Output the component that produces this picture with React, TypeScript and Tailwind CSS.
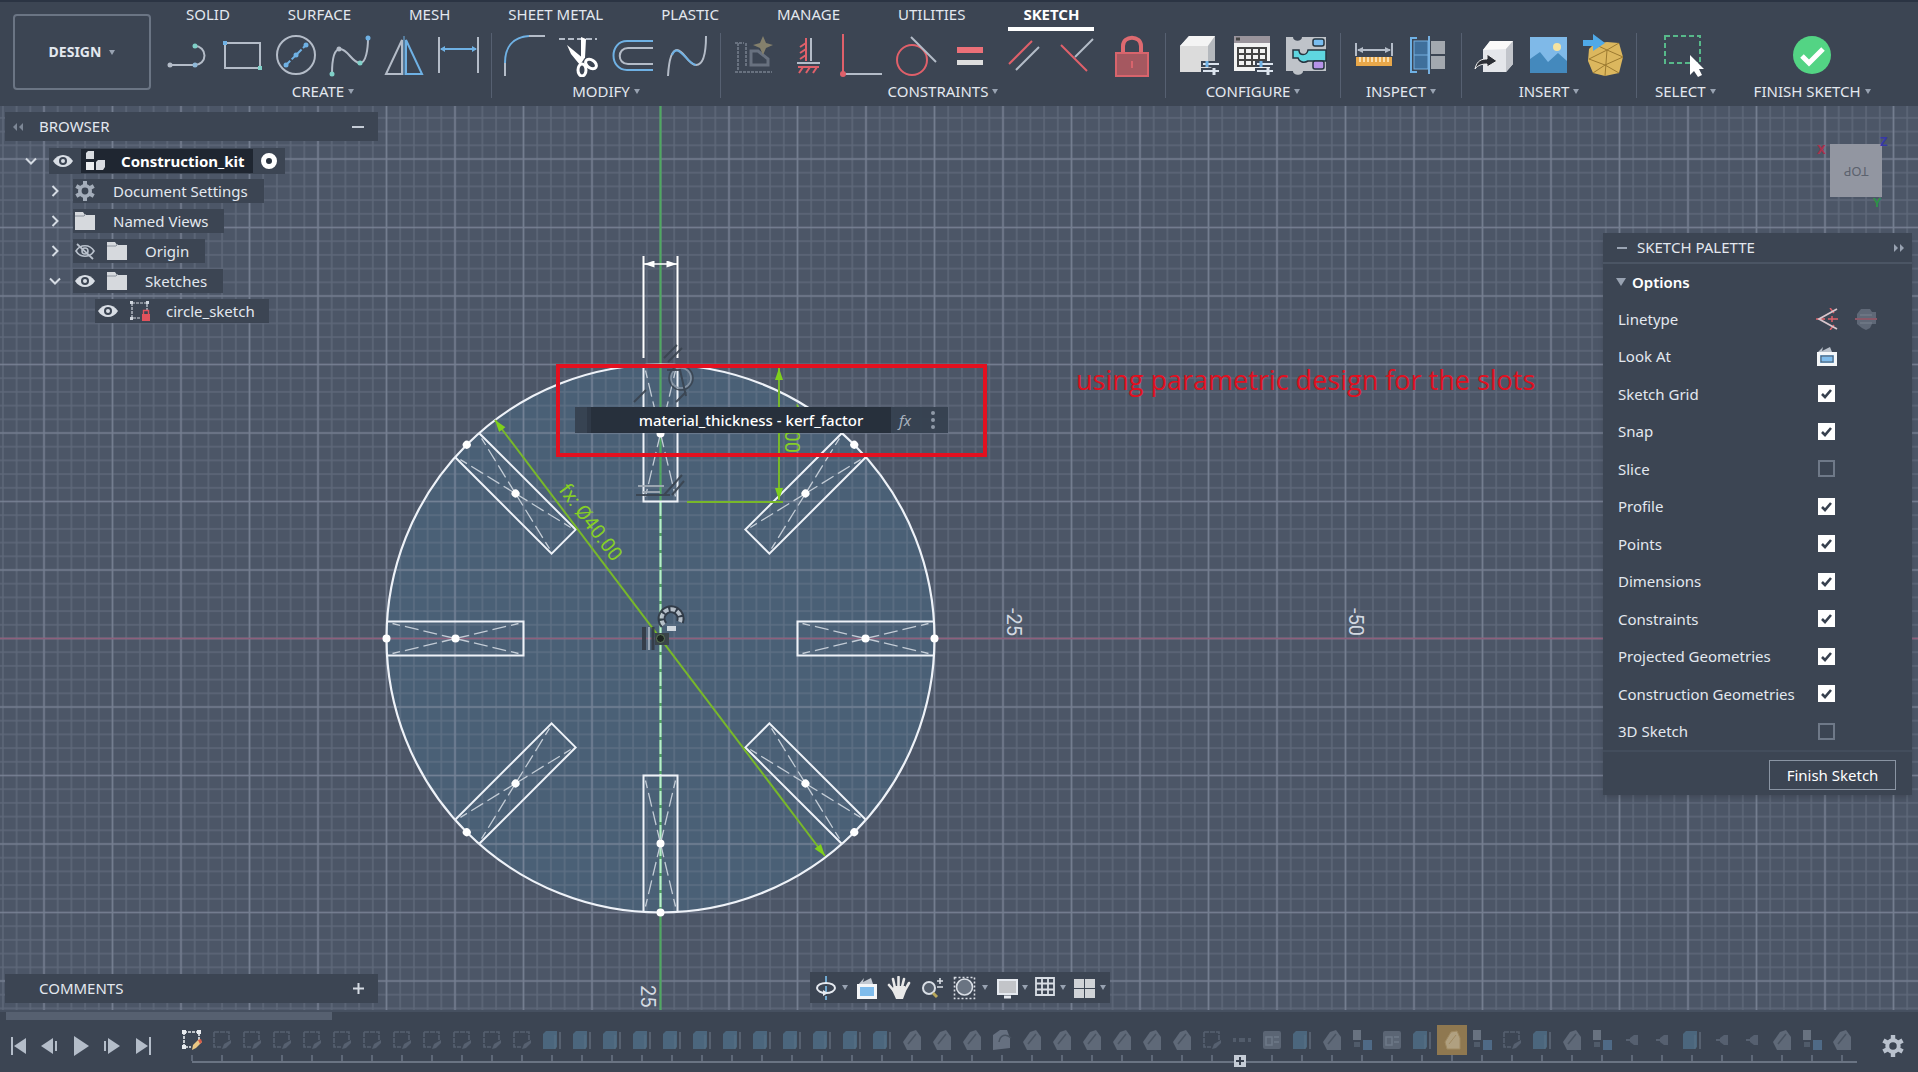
import type { ReactNode } from "react";

const GREY = "#b4bcc8";
const BLUE = "#6fb1e4";
const RED = "#e0606a";
const TEAL = "#7fd0c8";

function Svg({ size = 44, box = 44, children }: { size?: number; box?: number; children: ReactNode }) {
  return (
    <svg width={size} height={size} viewBox={`0 0 ${box} ${box}`} fill="none" aria-hidden="true" className="shrink-0">
      {children}
    </svg>
  );
}

/* ---------- Toolbar icons ---------- */

const createIcons: [string, ReactNode][] = [
  ["Line", <><path d="M4 32H29A9.5 9.5 0 0 0 29 13" stroke={GREY} strokeWidth="2" /><circle cx="4" cy="32" r="2.5" fill={GREY} /><circle cx="29" cy="32" r="2.5" fill="#8fb8d8" /><circle cx="29" cy="13" r="2.5" fill={TEAL} /></>],
  ["Rectangle", <><rect x="5" y="10" width="35" height="25" stroke={GREY} strokeWidth="2" /><rect x="3" y="8" width="4" height="4" fill={BLUE} /><rect x="38" y="33" width="4" height="4" fill={TEAL} /></>],
  ["Circle", <><circle cx="22" cy="22" r="19" stroke={GREY} strokeWidth="2" /><path d="M12 32L32 12" stroke={BLUE} strokeWidth="2" strokeDasharray="6 2" /><circle cx="12" cy="32" r="2.5" fill={BLUE} /><circle cx="22" cy="22" r="2.5" fill={BLUE} /><circle cx="32" cy="12" r="2.5" fill={BLUE} /></>],
  ["Spline", <><path d="M4 41C4 28 6 16 12 16C20 16 24 30 32 30C38 30 40 16 40 5" stroke={GREY} strokeWidth="2" /><circle cx="4" cy="41" r="2.5" fill={TEAL} /><circle cx="11" cy="16" r="2.5" fill={GREY} /><circle cx="32" cy="30" r="2.5" fill={TEAL} /><circle cx="40" cy="5" r="2.5" fill={BLUE} /></>],
  ["Mirror", <><path d="M20 7V41H4Z" stroke={GREY} strokeWidth="2" /><path d="M24 7V41H40Z" stroke={BLUE} strokeWidth="2" /><path d="M22 3V42" stroke={BLUE} strokeWidth="1" /></>],
  ["Dimension", <><path d="M3 4V40M42 4V40" stroke={GREY} strokeWidth="2" /><path d="M5 16H40" stroke={BLUE} strokeWidth="2" /><path d="M4 16L9 13V19ZM41 16L36 13V19Z" fill={BLUE} /></>],
];

const modifyIcons: [string, ReactNode][] = [
  ["Fillet", <><path d="M2 43V30" stroke={GREY} strokeWidth="2" /><path d="M2 30C2 14 10 4 26 3" stroke={BLUE} strokeWidth="2" /><path d="M26 3H42" stroke={GREY} strokeWidth="2" /></>],
  ["Trim", <><path d="M2 6H40" stroke={GREY} strokeWidth="2" strokeDasharray="6 3" /><path d="M24 4L29 6L28 25L24 28ZM10 12L27 26L23 32L14 21Z" fill="#fff" /><ellipse cx="25" cy="37" rx="4" ry="6" stroke="#fff" strokeWidth="3" /><ellipse cx="34" cy="31" rx="6" ry="4" transform="rotate(35 34 31)" stroke="#fff" strokeWidth="3" /></>],
  ["Offset", <><path d="M42 8H16C-2 8 -2 37 16 37H42" stroke={BLUE} strokeWidth="2" /><path d="M42 15H17C6 15 6 31 17 31H42" stroke={GREY} strokeWidth="2" /></>],
  ["Curvature", <><path d="M3 43C4 26 7 17 12 17C19 17 23 32 31 32C39 32 41 18 41 3" stroke={GREY} strokeWidth="2" /><path d="M7 22C13 8 22 31 31 32" stroke={BLUE} strokeWidth="2" /></>],
];

const constraintIcons: [string, ReactNode][] = [
  ["AutoConstrain", <><path d="M6 10V38M3 10H12M3 39H40M14 10V34" stroke="#68717f" strokeWidth="2" strokeDasharray="3 1" /><path d="M19 18V32H36V26L26 18Z" stroke="#68717f" strokeWidth="3" /><path d="M31 3L34 10L41 12L34 15L31 22L28 15L21 12L28 10Z" fill="#84806c" /></>],
  ["Horizontal/Vertical", <><path d="M25 5V28" stroke={GREY} strokeWidth="2" /><path d="M20 5V28M20 10L14 14M20 16L14 20M20 22L14 26" stroke={RED} strokeWidth="2" /><path d="M11 30H34" stroke={GREY} strokeWidth="2" /><path d="M12 34H33M17 34L13 40M24 34L20 40M31 34L27 40" stroke={RED} strokeWidth="2" /></>],
  ["Coincident", <><path d="M3 1V40" stroke={RED} strokeWidth="2" /><path d="M5 41H42" stroke={GREY} strokeWidth="2" /><circle cx="3" cy="41" r="3" fill={RED} /></>],
  ["Tangent", <><circle cx="18" cy="27" r="15" stroke={RED} strokeWidth="2" /><path d="M17 4L42 29" stroke={GREY} strokeWidth="2" /></>],
  ["Equal", <><rect x="9" y="14" width="26" height="6" fill="#ec7078" /><rect x="9" y="27" width="26" height="5" fill="#dedede" /></>],
  ["Parallel", <><path d="M7 31L30 8" stroke={RED} strokeWidth="2" /><path d="M14 37L37 14" stroke={GREY} strokeWidth="2" /></>],
  ["Perpendicular", <><path d="M5 12L31 38" stroke={RED} strokeWidth="2" /><path d="M19 24L37 6" stroke={GREY} strokeWidth="2" /></>],
  ["Fix/UnFix", <><path d="M13 19V13C13 2 31 2 31 13V19" stroke="#dd6a70" strokeWidth="4" /><rect x="6" y="20" width="32" height="23" fill="#a55860" stroke="#d8646c" strokeWidth="2" /><path d="M22 28V35" stroke="#d8646c" strokeWidth="2" /></>],
];

const Sliders = () => (
  <>
    <path d="M24 31H42M24 38H42" stroke="#3c4553" strokeWidth="6" />
    <path d="M26 31H42M26 38H42" stroke="#dce4ee" strokeWidth="2" />
    <path d="M30 28V34" stroke={BLUE} strokeWidth="3" />
    <path d="M37 35V42" stroke="#dce4ee" strokeWidth="3" />
  </>
);

const configureIcons: [string, ReactNode][] = [
  ["Configure design", <><path d="M3 13L12 3H38V29L31 39H3Z" fill="#dcdcdc" /><path d="M3 13L12 3H38L31 13Z" fill="#f4f4f4" /><path d="M31 13L38 3V29L31 39Z" fill="#b4b8bd" /><Sliders /></>],
  ["Configuration table", <><rect x="3" y="3" width="36" height="35" fill="#f2f2f2" /><rect x="3" y="3" width="36" height="7" fill="#9a949c" /><path d="M5 6H9" stroke="#444" strokeWidth="3" /><path d="M7 15H35V33H7ZM7 21H35M7 27H35M14 15V33M21 15V33M28 15V33" stroke="#444" strokeWidth="2" /><Sliders /></>],
  ["Rules", <><path d="M1 4H8C8 9 17 9 17 4H41V38H18C18 43 8 43 8 38H1Z" fill="#bfc3c9" /><path d="M8 17H14C14 23 22 23 23 17H41V28H23C18 31 14 28 13 25H8Z" fill="#5fd6e0" stroke="#26343f" strokeWidth="1.5" /><rect x="28" y="6" width="11" height="7" rx="2" fill="#79bdf0" stroke="#26343f" strokeWidth="1.5" /><rect x="28" y="28" width="11" height="8" rx="2" fill="#b693e8" stroke="#26343f" strokeWidth="1.5" /></>],
];

const inspectIcons: [string, ReactNode][] = [
  ["Measure", <><path d="M4 10V23M40 10V23M6 17H38" stroke={GREY} strokeWidth="2" /><path d="M5 17L11 14V20ZM39 17L33 14V20Z" fill={GREY} /><rect x="4" y="24" width="36" height="9" fill="#e9a84a" /><path d="M8 24V29M12 24V29M16 24V29M20 24V29M24 24V29M28 24V29M32 24V29M36 24V29" stroke="#fff0cf" strokeWidth="1.5" /></>],
  ["Section", <><path d="M11 5H5V39H11" stroke={BLUE} strokeWidth="2" /><rect x="8" y="8" width="14" height="28" fill="#3f6f9b" stroke="#76b0e0" /><path d="M8 22H22" stroke="#76b0e0" /><path d="M23 3V41" stroke="#76b0e0" strokeWidth="2" /><rect x="25" y="8" width="14" height="13" fill="#a3a8af" /><rect x="25" y="23" width="14" height="13" fill="#a3a8af" /></>],
];

const insertIcons: [string, ReactNode][] = [
  ["Insert derive", <><path d="M10 17L17 8H40V31L33 39H10Z" fill="#e4e6ea" /><path d="M10 17L17 8H40L33 16Z" fill="#fafafa" /><path d="M33 16L40 8V31L33 39Z" fill="#c2c5cb" /><path d="M2 36C4 27 9 26 14 26V21L24 28L14 34V31C9 31 5 32 2 36Z" fill="#2c2f36" stroke="#f0f0f0" /></>],
  ["Insert canvas", <><rect x="3" y="4" width="37" height="36" fill="#7fb9e8" /><path d="M3 26L13 19L21 29L31 20L40 28V40H3Z" fill="#4489bd" /><circle cx="30" cy="14" r="4" fill="#f6e3a0" /></>],
  ["Insert mesh", <><path d="M13 11L26 9L38 10L42 24L38 40L24 43L12 40L7 28L8 16Z" fill="#dcb75e" /><path d="M13 11L26 17L38 10M8 26L26 17L42 24M26 17L24 43M8 26L24 32L42 24M12 40L24 32L38 40" stroke="#9c7a30" /><path d="M2 7H12V1L24 10L12 18V13H2Z" fill="#4fa9e8" /></>],
];

const selectIcons: [string, ReactNode][] = [
  ["Select", <><rect x="2" y="3" width="35" height="27" stroke="#57b98a" strokeWidth="2" strokeDasharray="5 3" /><path d="M27 22V42L31 38L35 44L39 42L36 36H41Z" fill="#fff" /></>],
];
const finishIcons: [string, ReactNode][] = [
  ["Finish sketch", <><circle cx="22" cy="22" r="19" fill="#53d484" /><path d="M12 23L19 30L33 16" stroke="#fff" strokeWidth="5" /></>],
];

const groups: { label: string; icons: [string, ReactNode][]; cls: string }[] = [
  { label: "CREATE", icons: createIcons, cls: "border-r px-1.5" },
  { label: "MODIFY", icons: modifyIcons, cls: "border-r px-1.5" },
  { label: "CONSTRAINTS", icons: constraintIcons, cls: "border-r px-1.5" },
  { label: "CONFIGURE", icons: configureIcons, cls: "border-r px-1.5" },
  { label: "INSPECT", icons: inspectIcons, cls: "border-r px-1.5" },
  { label: "INSERT", icons: insertIcons, cls: "border-r px-1.5" },
  { label: "SELECT", icons: selectIcons, cls: "px-[18px]" },
  { label: "FINISH SKETCH", icons: finishIcons, cls: "px-5" },
];

const tabs = ["SOLID", "SURFACE", "MESH", "SHEET METAL", "PLASTIC", "MANAGE", "UTILITIES", "SKETCH"];

function Caret() {
  return (
    <svg width="6" height="5" viewBox="0 0 6 5" aria-hidden="true" className="shrink-0">
      <path d="M0 0H6L3 5Z" fill="#98a2b1" />
    </svg>
  );
}

function Toolbar() {
  return (
    <header className="flex border-t-2 border-[#2b3443] bg-[#3c4553] pb-2">
      <div className="w-[155px] shrink-0 pt-3 pl-[13px]">
        <button className="flex h-[76px] w-[138px] items-center justify-center gap-2 rounded border-2 border-[#6b7584] text-sm font-bold">
          DESIGN <Caret />
        </button>
      </div>
      <div className="min-w-0 flex-1">
        <nav className="flex gap-7 pl-4">
          {tabs.map((t) => (
            <button
              key={t}
              className={
                t === "SKETCH"
                  ? "h-[29px] border-b-4 border-white px-[15px] pb-0.5 text-[15px] leading-5 font-bold whitespace-nowrap text-white"
                  : "h-[29px] border-b-4 border-transparent px-[15px] pb-0.5 text-[15px] leading-5 whitespace-nowrap"
              }
            >
              {t}
            </button>
          ))}
        </nav>
        <div className="flex pt-0.5">
          {groups.map((g) => (
            <section key={g.label} className={`flex h-[65px] flex-col items-center border-[#566071] ${g.cls}`}>
              <div className="flex justify-center">
                {g.icons.map(([name, art]) => (
                  <button key={name} aria-label={name} className="flex w-[54px] shrink-0 justify-center">
                    <Svg>{art}</Svg>
                  </button>
                ))}
              </div>
              <button className="mt-1 flex items-center gap-1 text-[15px] leading-5 whitespace-nowrap">
                {g.label} <Caret />
              </button>
            </section>
          ))}
        </div>
      </div>
    </header>
  );
}

/* ---------- Browser ---------- */

const Eye = () => (
  <Svg size={20} box={20}>
    <path d="M0 10C5 2 15 2 20 10C15 18 5 18 0 10Z" fill="#d9dee5" />
    <circle cx="10" cy="10" r="4" fill="#3c4553" />
    <circle cx="10" cy="10" r="2" fill="#d9dee5" />
  </Svg>
);
const EyeOff = () => (
  <Svg size={20} box={20}>
    <path d="M1 10C5 3 15 3 19 10C15 17 5 17 1 10Z" stroke="#b9c1cc" strokeWidth="1.6" />
    <circle cx="10" cy="10" r="3" stroke="#b9c1cc" strokeWidth="1.6" />
    <path d="M2 3L18 18" stroke="#b9c1cc" strokeWidth="1.8" />
  </Svg>
);
const Folder = () => (
  <Svg size={20} box={20}>
    <path d="M0 1H8L10 4H20V19H0Z" fill="#d6d9dd" />
    <path d="M0 5H9L11 3" stroke="#8a919c" />
  </Svg>
);
const GearIcon = ({ size = 20, color = "#a4adba" }: { size?: number; color?: string }) => (
  <Svg size={size} box={20}>
    <circle cx="10" cy="10" r="5.2" stroke={color} strokeWidth="3.6" />
    <path d="M10 0V4M10 16V20M1.3 5L4.8 7M15.2 13L18.7 15M1.3 15L4.8 13M15.2 7L18.7 5" stroke={color} strokeWidth="4" />
  </Svg>
);
const Parts = () => (
  <Svg size={20} box={20}>
    <path d="M1 2L3 0H9V8H1Z" fill="#d8dbe0" />
    <path d="M1 11H9V19H1Z" fill="#eceef0" />
    <path d="M11 11L13 9H20V16L18 19H11Z" fill="#d8dbe0" />
  </Svg>
);
const SketchLock = () => (
  <Svg size={20} box={20}>
    <path d="M2 2H17V10M2 2V17H10" stroke="#d0d6de" strokeWidth="1.2" strokeDasharray="3 1" />
    <path d="M0 0H3V3H0ZM16 0H19V3H16ZM0 16H3V19H0Z" fill="#d0d6de" />
    <rect x="12" y="13" width="8" height="7" fill="#e0525c" />
    <path d="M13.500 13V9.500H18.500V13" stroke="#e0525c" strokeWidth="1.4" />
  </Svg>
);

function Chevron({ open }: { open?: boolean }) {
  return (
    <svg width="12" height="12" viewBox="0 0 12 12" fill="none" stroke="#d5dbe3" strokeWidth="2" aria-hidden="true">
      <path d={open ? "M1 3.5L6 8.5L11 3.5" : "M3.5 1L8.5 6L3.5 11"} />
    </svg>
  );
}

const treeRows: { label: string; open?: boolean; icons: ReactNode }[] = [
  { label: "Document Settings", icons: <GearIcon /> },
  { label: "Named Views", icons: <Folder /> },
  { label: "Origin", icons: <><EyeOff /><Folder /></> },
  { label: "Sketches", open: true, icons: <><Eye /><Folder /></> },
];

function Browser() {
  return (
    <aside className="w-[373px]">
      <div className="flex h-[29px] items-center bg-[#3c4553] pl-2">
        <svg width="10" height="8" viewBox="0 0 10 8" fill="#7d8796" aria-hidden="true"><path d="M0 4L4 0V8ZM6 4L10 0V8Z" /></svg>
        <h2 className="ml-4 flex-1 text-[15px]">BROWSER</h2>
        <button aria-label="Collapse browser" className="mr-3.5 h-0.5 w-3 bg-[#c5ccd6]" />
      </div>
      <div className="mt-[7px] flex flex-col gap-1">
        <div className="ml-5 flex h-[26px] items-center">
          <button aria-label="Collapse Construction_kit" className="flex w-6"><Chevron open /></button>
          <div className="flex h-full items-center gap-2 bg-[#3c4553] pr-2 pl-1">
            <Eye />
            <div className="flex h-6 items-center gap-4 bg-[#1f2631] pr-2 pl-1">
              <Parts />
              <span className="text-[15px] font-bold text-white">Construction_kit</span>
            </div>
            <input type="radio" defaultChecked aria-label="Activate component" className="size-4 appearance-none rounded-full border-[5px] border-white bg-[#29323f]" />
          </div>
        </div>
        {treeRows.map((r) => (
          <div key={r.label} className="ml-11 flex h-[26px] items-center">
            <button aria-label={`Toggle ${r.label}`} className="flex w-6"><Chevron open={r.open} /></button>
            <div className="flex h-6 items-center gap-3 bg-[#3c4553] pr-4 pl-0.5">
              {r.icons}
              <span className="pl-1.5 text-[15px]">{r.label}</span>
            </div>
          </div>
        ))}
        <div className="ml-[90px] flex h-[26px] items-center">
          <div className="flex h-6 items-center gap-3 bg-[#3c4553] pr-3.5 pl-[3px]">
            <Eye />
            <SketchLock />
            <span className="pl-1 text-[15px]">circle_sketch</span>
          </div>
        </div>
      </div>
    </aside>
  );
}

/* ---------- Palette ---------- */

const options: [string, boolean][] = [
  ["Sketch Grid", true],
  ["Snap", true],
  ["Slice", false],
  ["Profile", true],
  ["Points", true],
  ["Dimensions", true],
  ["Constraints", true],
  ["Projected Geometries", true],
  ["Construction Geometries", true],
  ["3D Sketch", false],
];

const LookAt = ({ size = 20 }: { size?: number }) => (
  <Svg size={size} box={20}>
    <path d="M0 7L6 1L5 5L13 1L15 6Z" fill="#b9c0ca" />
    <rect x="1.5" y="7.5" width="17" height="11" fill="#7fbcec" stroke="#f4f6f8" strokeWidth="3" />
    <rect x="4" y="10" width="12" height="6" stroke="#4a5564" />
  </Svg>
);

function CheckOption({ label, on }: { label: string; on: boolean }) {
  return (
    <label className="grid grid-cols-[200px_18px] items-center text-[15px]">
      {label}
      <span className="grid size-[17px]">
        <input type="checkbox" defaultChecked={on} className="peer col-start-1 row-start-1 size-[17px] appearance-none border-2 border-[#6f7988] checked:border-white checked:bg-white" />
        <svg viewBox="0 0 17 17" fill="none" aria-hidden="true" className="pointer-events-none col-start-1 row-start-1 hidden peer-checked:block">
          <path d="M4 9L7 12L13 5" stroke="#37404e" strokeWidth="2.6" />
        </svg>
      </span>
    </label>
  );
}

function Palette() {
  return (
    <aside className="pointer-events-auto w-[309px] bg-[#3c4553] shadow-md">
      <div className="flex h-[31px] items-center border-b-2 border-[#4b5564] pr-2 pl-3.5">
        <span className="h-0.5 w-2.5 bg-[#9aa4b3]" />
        <h2 className="ml-2.5 flex-1 text-[15px]">SKETCH PALETTE</h2>
        <svg width="10" height="8" viewBox="0 0 10 8" fill="#98a2b1" aria-hidden="true"><path d="M0 0L4 4L0 8ZM6 0L10 4L6 8Z" /></svg>
      </div>
      <button className="flex h-9 w-full items-center gap-1.5 pl-[13px] text-[15px] font-semibold text-white">
        <svg width="10" height="8" viewBox="0 0 10 8" fill="#98a2b1" aria-hidden="true"><path d="M0 0H10L5 8Z" /></svg>
        Options
      </button>
      <div className="grid h-[450px] auto-rows-fr pl-[15px]">
        <div className="grid grid-cols-[198px_39px_22px] items-center text-[15px]">
          Linetype
          <button aria-label="Construction linetype">
            <Svg size={22} box={22}>
              <path d="M0 11H9M12 11H22M14 0L18 5M14 22L18 17M16 8V14" stroke={RED} strokeWidth="1.500" />
              <path d="M21 1L3 11L21 21" stroke="#d8c5cc" strokeWidth="1.800" />
            </Svg>
          </button>
          <button aria-label="Centerline linetype">
            <Svg size={22} box={22}>
              <path d="M6 1H15L17 4H21V16H17L15 20L11 22L7 20L2 16V6Z" fill="#5f6877" />
              <path d="M0 11H22" stroke="#8a5868" strokeWidth="2" />
              <path d="M5 7H17M5 15H17" stroke="#6c7583" strokeWidth="2" />
            </Svg>
          </button>
        </div>
        <div className="grid grid-cols-[199px_22px] items-center text-[15px]">
          Look At
          <button aria-label="Look at"><LookAt /></button>
        </div>
        {options.map(([label, on]) => (
          <CheckOption key={label} label={label} on={on} />
        ))}
      </div>
      <div className="flex justify-end border-t-2 border-[#434d5c] pt-2 pr-4 pb-[5px]">
        <button className="h-[30px] w-[127px] border border-[#8a94a3] text-[15px] text-white">Finish Sketch</button>
      </div>
    </aside>
  );
}

/* ---------- Canvas drawing ---------- */

const CX = 660.5;
const CY = 532.5;
const R = 274;

function Slot({ angle }: { angle: number }) {
  return (
    <g transform={`rotate(${angle} ${CX} ${CY})`} fill="none" stroke="#eef2f8">
      <path d={`M${CX - 17} ${CY - R + 1}V${CY - 137}H${CX + 17}V${CY - R + 1}`} strokeWidth="2" />
      <path d={`M${CX} ${CY - 205}L${CX - 15} ${CY - R + 6}M${CX} ${CY - 205}L${CX + 15} ${CY - R + 6}M${CX} ${CY - 205}L${CX - 15} ${CY - 142}M${CX} ${CY - 205}L${CX + 15} ${CY - 142}`} stroke="#c3ccd6" strokeWidth="1.3" strokeDasharray="14 5" />
      {angle !== 0 && <circle cx={CX} cy={CY - R} r="4" fill="#fff" stroke="none" />}
      <circle cx={CX} cy={CY - 205} r="4" fill="#fff" stroke="none" />
    </g>
  );
}

function Drawing() {
  return (
    <svg viewBox="0 0 1918 904" preserveAspectRatio="xMidYMid slice" className="absolute inset-0 size-full" role="img" aria-label="Sketch of a slotted circle">
      <defs>
        <pattern id="minor" x={CX - 6.85} y={CY - 6.85} width="13.7" height="13.7" patternUnits="userSpaceOnUse">
          <path d="M0 6.85H13.7M6.85 0V13.7" stroke="#8792a4" strokeOpacity="0.3" strokeWidth="1.5" />
        </pattern>
        <pattern id="major" x={CX - 34.25} y={CY - 34.25} width="68.5" height="68.5" patternUnits="userSpaceOnUse">
          <path d="M0 34.25H68.5M34.25 0V68.5" stroke="#929caf" strokeOpacity="0.45" strokeWidth="1.6" />
        </pattern>
        <marker id="tipGreen" viewBox="0 0 12 8" refX="12" refY="4" markerWidth="14" markerHeight="8" markerUnits="userSpaceOnUse" orient="auto-start-reverse">
          <path d="M0 0L12 4L0 8Z" fill="#7fd01c" />
        </marker>
        <marker id="tipWhite" viewBox="0 0 12 8" refX="12" refY="4" markerWidth="13" markerHeight="7" markerUnits="userSpaceOnUse" orient="auto-start-reverse">
          <path d="M0 0L12 4L0 8Z" fill="#fff" />
        </marker>
      </defs>
      <rect width="1918" height="904" fill="#4c5667" />
      <circle cx={CX} cy={CY} r={R} fill="#4a6076" />
      <rect width="1918" height="904" fill="url(#minor)" />
      <rect width="1918" height="904" fill="url(#major)" />
      <path d={`M0 ${CY}H1918`} stroke="#8f5f7c" strokeWidth="1.6" />
      <path d={`M${CX} 0V904`} stroke="#4fa860" strokeWidth="2" />
      <path d={`M${CX} 396V806`} stroke="#b8f0cc" strokeWidth="2" strokeDasharray="14 3" />
      <circle cx={CX} cy={CY} r={R} fill="none" stroke="#eef2f8" strokeWidth="2.2" />
      {[0, 45, 90, 135, 180, 225, 270, 315].map((a) => (
        <Slot key={a} angle={a} />
      ))}

      {/* slot width dimension */}
      <path d="M643.5 150V252M677.5 150V252" stroke="#fff" strokeWidth="2" />
      <path d="M644 158H677" stroke="#fff" strokeWidth="1.5" markerStart="url(#tipWhite)" markerEnd="url(#tipWhite)" />

      {/* slot length dimension */}
      <g stroke="#78b82a" strokeWidth="2">
        <path d="M779 262V394" markerStart="url(#tipGreen)" markerEnd="url(#tipGreen)" />
        <path d="M687 396H783" />
        <path d="M495 314L825 750" markerStart="url(#tipGreen)" markerEnd="url(#tipGreen)" />
      </g>
      <g fill="#86cf26" fontFamily="Roboto, sans-serif">
        <text transform="translate(785 347) rotate(90)" fontSize="20" textAnchor="end">10.00</text>
        <text transform="translate(558 384) rotate(53)" fontSize="20">fx: Ø40.00</text>
      </g>

      {/* constraint glyphs */}
      <g stroke="#3a4450" strokeWidth="2" fill="none" opacity="0.9">
        <path d="M664 252L677 239M668 256L682 242M634 296L646 284M672 389L684 375M664 389L682 369M676 296L686 286" />
        <circle cx="681" cy="272" r="10" stroke="#8a97a5" strokeWidth="1.6" />
        <circle cx="681" cy="272" r="12" strokeWidth="1.5" />
        <path d="M667 264H680L686 290" />
        <path d="M638 380H664M642 386H660" stroke="#a3adb8" />
        <path d="M636 389H670" />
        <path d="M644 521V544" stroke="#333b46" strokeWidth="4" />
        <path d="M649 521V544" stroke="#c2cad4" strokeWidth="1.5" />
        <path d="M653 521V544" stroke="#333b46" strokeWidth="3" />
        <path d="M664 519A9.500 9.500 0 1 1 680 516" stroke="#2f3844" strokeWidth="8" />
        <path d="M664 519A9.500 9.500 0 1 1 680 516" stroke="#c0c8d0" strokeWidth="4" strokeDasharray="5 2" />
      </g>
      <path d="M667 520H676V525H667Z" fill="#d0d7de" />
      <rect x="655" y="527" width="14" height="12" fill="#3a444a" />
      <circle cx={CX} cy={CY} r="4" fill="#1e2622" stroke="#5f7a58" />

      {/* axis labels */}
      <g fill="#d3d9e1" fontFamily="Roboto, sans-serif" fontSize="20">
        <text transform="translate(1007 502) rotate(90)">-25</text>
        <text transform="translate(1349 502) rotate(90)">-50</text>
        <text transform="translate(641 879) rotate(90)">25</text>
      </g>

      {/* annotation */}
      <rect x="558" y="260" width="427" height="89" fill="none" stroke="#e3101f" strokeWidth="4" />
      <text x="1076" y="284" fill="#e01020" fontFamily="Open Sans, sans-serif" fontSize="27">using parametric design for the slots</text>

      {/* view cube */}
      <rect x="1830" y="38" width="52" height="53" fill="#9296a1" />
      <text transform="translate(1856 61) rotate(180)" fill="#5c626e" fontFamily="Noto Sans, sans-serif" fontSize="13" textAnchor="middle">TOP</text>
      <g fontFamily="Noto Sans, sans-serif" fontSize="13" fontWeight="700">
        <text x="1817" y="48" fill="#a8324c">X</text>
        <text x="1880" y="40" fill="#3638a8">Z</text>
        <text x="1873" y="101" fill="#2c9148">Y</text>
      </g>
    </svg>
  );
}

function DimensionInput() {
  return (
    <div className="absolute top-[301px] left-[575px] flex h-[26px] w-[373px] items-stretch bg-[#364150]/95">
      <span className="w-4 border-r-4 border-[#2f3947]" />
      <input aria-label="Dimension value" defaultValue="material_thickness - kerf_factor" className="w-[300px] bg-[#27303c] pl-5 text-center text-[15px] font-medium text-white outline-none" />
      <button className="w-7 text-[15px] text-[#a9b2be] italic">fx</button>
      <button aria-label="More" className="flex w-7 items-center justify-center">
        <svg width="4" height="18" fill="#8f99a7" aria-hidden="true"><circle cx="2" cy="2" r="2" /><circle cx="2" cy="9" r="2" /><circle cx="2" cy="16" r="2" /></svg>
      </button>
    </div>
  );
}

/* ---------- Navigation bar ---------- */

const navItems: { name: string; caret?: boolean; art: ReactNode; cls: string }[] = [
  { name: "Orbit", caret: true, cls: "w-[42px]", art: <><path d="M12 0V24" stroke="#6fa8cf" strokeWidth="2" strokeDasharray="8 2" /><ellipse cx="12" cy="12" rx="9" ry="5" stroke="#e6eaf0" strokeWidth="2" /><path d="M9 14L14 17L9 20Z" fill="#e6eaf0" /></> },
  { name: "Look at", cls: "w-[30px]", art: <><path d="M3 9L9 2L8 6L16 2L18 8Z" fill="#c3c9d1" /><rect x="3.500" y="9.500" width="17" height="12" fill="#7fbcec" stroke="#f4f6f8" strokeWidth="3" /></> },
  { name: "Pan", cls: "w-[34px]", art: <><path d="M8 12L6 3M11.500 11V1M15 11L17 3M18 14L22 7M7 15L2 9" stroke="#e9e9e9" strokeWidth="2.600" strokeLinecap="round" /><path d="M7 10L18 10L19 15L16 23H9L5 14Z" fill="#e9e9e9" /></> },
  { name: "Zoom", cls: "w-[32px]", art: <><circle cx="9" cy="12" r="6" stroke="#d9dee5" strokeWidth="2" fill="#545e6c" /><path d="M13 17L17 21" stroke="#b9a85c" strokeWidth="3" /><path d="M17 5H23M20 2V8M17 11H23" stroke="#d9dee5" strokeWidth="1.600" /></> },
  { name: "Fit", caret: true, cls: "w-[44px]", art: <><rect x="1.500" y="1.500" width="20" height="21" stroke="#d9dee5" strokeWidth="1.600" strokeDasharray="2 2" /><circle cx="11.500" cy="11" r="8" fill="#6a7482" stroke="#d9dee5" strokeWidth="1.600" /></> },
  { name: "Display settings", caret: true, cls: "w-[40px]", art: <><rect x="3" y="4" width="19" height="14" fill="#c2c4c8" stroke="#e6eaf0" strokeWidth="2" /><path d="M9 21H16" stroke="#e6eaf0" strokeWidth="3" /></> },
  { name: "Grid and snaps", caret: true, cls: "w-[38px]", art: <path d="M2 2H20V19H2ZM2 7.500H20M2 13.500H20M8 2V19M14 2V19" stroke="#d9dee5" strokeWidth="1.800" /> },
  { name: "Viewports", caret: true, cls: "w-[40px]", art: <path d="M1 3H11V12H1ZM12 3H22V12H12ZM1 13H11V22H1ZM12 13H22V22H12Z" fill="#d0d3d7" /> },
];

function NavBar() {
  return (
    <div className="flex h-[31px] items-center bg-[#3c4553]">
      {navItems.map((n) => (
        <button key={n.name} aria-label={n.name} className={`flex items-center gap-px ${n.cls}`}>
          <span className="flex flex-1 justify-center"><Svg size={24} box={24}>{n.art}</Svg></span>
          {n.caret && <span className="pr-1"><Caret /></span>}
        </button>
      ))}
    </div>
  );
}

/* ---------- Timeline ---------- */

type Kind = "active" | "sketch" | "extrude" | "fillet" | "shell" | "dots" | "box" | "comp" | "selected" | "joint";

const repeat = (k: Kind, n: number): Kind[] => Array.from({ length: n }, () => k);
const features: Kind[] = [
  "active", ...repeat("sketch", 11), ...repeat("extrude", 12), "fillet", "fillet", "fillet", "shell", ...repeat("fillet", 6),
  "sketch", "dots", "box", "extrude", "fillet", "comp", "box", "extrude", "selected", "comp", "sketch", "extrude",
  "fillet", "comp", "joint", "joint", "extrude", "joint", "joint", "fillet", "comp", "fillet",
];

const featureArt: Record<Kind, ReactNode> = {
  active: <><path d="M2 2H17V10M2 2V17H9" stroke="#e8ebef" strokeWidth="1.600" strokeDasharray="3 1" /><path d="M0 0H4V4H0ZM15 0H19V4H15ZM0 15H4V19H0Z" fill="#e8ebef" /><path d="M10 20L11 15L17 9L20 12L14 18Z" fill="#e9c684" /><path d="M16 10L19 9L20 12L18 14Z" fill="#d85c48" /></>,
  sketch: <><path d="M2 2H17V10M2 2V17H9" stroke="#566070" strokeWidth="1.600" strokeDasharray="5 1" /><path d="M10 19L12 14L19 10V13L14 18Z" fill="#566070" /></>,
  extrude: <><path d="M1 4L4 1H15V17L13 19H1Z" fill="#4b667d" /><path d="M13 5V19" stroke="#5a7287" /><path d="M18 2V19" stroke="#5f6a79" strokeWidth="1.500" /></>,
  fillet: <><path d="M1 12L8 2L14 0L19 7V20H5Z" fill="#5f6978" /><path d="M6 14L14 4" stroke="#485260" strokeWidth="1.500" /></>,
  shell: <><path d="M1 5L8 0H15L18 8V18L1 20Z" fill="#667080" /><path d="M7 12C8 5 14 3 19 8" stroke="#485260" strokeWidth="1.500" /></>,
  dots: <path d="M1 10H4M7 10H13M16 10H19" stroke="#525c6b" strokeWidth="4" />,
  box: <><rect x="1" y="1" width="18" height="18" rx="2" fill="#5b6574" /><path d="M4 7H10V15H4ZM12 7H17M12 12H17" stroke="#6f7988" strokeWidth="1.500" /></>,
  comp: <><path d="M1 0H9V10H1Z" fill="#687280" /><path d="M2 12H8V17H2Z" fill="#505b6a" /><path d="M11 10H20V20H11Z" fill="#4f6a86" /></>,
  selected: <><path d="M3 12L9 2L15 1L18 8V19H5Z" fill="#b0a080" stroke="#a08a62" /><path d="M7 14L14 5" stroke="#a08a62" /></>,
  joint: <><path d="M4 10H12" stroke="#566070" strokeWidth="2" /><path d="M8 8L12 5H16V15H12L8 12Z" fill="#566070" /></>,
};

const playback: [string, ReactNode][] = [
  ["Go to start", <><path d="M4 2V20" stroke="#b4bdc9" strokeWidth="2" /><path d="M18 3V19L6 11Z" fill="#b4bdc9" /></>],
  ["Step back", <><path d="M14 3V19L2 11Z" fill="#b4bdc9" /><path d="M17 6V16" stroke="#b4bdc9" strokeWidth="2" /></>],
  ["Play", <path d="M4 1L19 11L4 21Z" fill="#b4bdc9" />],
  ["Step forward", <><path d="M7 3V19L19 11Z" fill="#b4bdc9" /><path d="M4 6V16" stroke="#b4bdc9" strokeWidth="2" /></>],
  ["Go to end", <><path d="M4 3V19L16 11Z" fill="#b4bdc9" /><path d="M18 2V20" stroke="#b4bdc9" strokeWidth="2" /></>],
];

function Timeline() {
  return (
    <footer className="border-t-2 border-[#465060] bg-[#3c4553]">
      <div className="ml-1.5 h-2 w-[326px] bg-[#566070]" />
      <div className="flex h-[52px]">
        <div className="flex w-[177px] shrink-0 items-center gap-[9px] pl-2">
          {playback.map(([name, art]) => (
            <button key={name} aria-label={name}><Svg size={22} box={22}>{art}</Svg></button>
          ))}
        </div>
        <div className="flex min-w-0 flex-1 overflow-hidden pt-[5px]">
          {features.map((k, i) => (
            <div key={i} className="flex w-[30px] shrink-0 flex-col items-center">
              <button aria-label={`Feature ${i + 1}`} className={k === "selected" ? "flex size-[30px] items-center justify-center bg-[#8f7850]" : "flex size-[30px] items-center justify-center"}>
                <Svg size={20} box={20}>{featureArt[k]}</Svg>
              </button>
              <span className="h-1.5 w-0.5 bg-[#5e6878]" />
              <span className={i === 0 ? "h-0.5 w-[15px] self-end bg-[#6a7483]" : "h-0.5 w-full bg-[#6a7483]"} />
              {k === "dots" && (
                <span className="-mt-2 mr-1 grid size-3 shrink-0 place-items-center bg-[#c5ccd6]">
                  <svg width="8" height="8" stroke="#37404e" strokeWidth="2" aria-hidden="true"><path d="M0 4H8M4 0V8" /></svg>
                </span>
              )}
            </div>
          ))}
        </div>
        <button aria-label="Timeline settings" className="mr-3.5 flex items-center"><GearIcon size={22} color="#b9c1cd" /></button>
      </div>
    </footer>
  );
}

export default function App() {
  return (
    <div className="flex min-h-screen flex-col bg-[#3c4553] font-['Noto_Sans',sans-serif] text-[#e3e8ef]">
      <Toolbar />
      <main className="relative flex flex-1 flex-col overflow-hidden">
        <Drawing />
        <DimensionInput />
        <div className="relative flex flex-1 items-start justify-between pt-1.5 pr-1.5 pl-[5px] pointer-events-none">
          <Browser />
          <div className="pt-[121px]"><Palette /></div>
        </div>
        <div className="relative grid grid-cols-[373px_1fr] items-end pb-[7px] pl-[5px]">
          <div className="flex h-[29px] items-center bg-[#3c4553] pr-3.5 pl-[34px]">
            <h2 className="flex-1 text-[15px]">COMMENTS</h2>
            <button aria-label="Add comment">
              <svg width="11" height="11" stroke="#d5dbe3" strokeWidth="2" aria-hidden="true"><path d="M0 5.500H11M5.500 0V11" /></svg>
            </button>
          </div>
          <div className="flex pl-[432px]"><NavBar /></div>
        </div>
      </main>
      <Timeline />
    </div>
  );
}
